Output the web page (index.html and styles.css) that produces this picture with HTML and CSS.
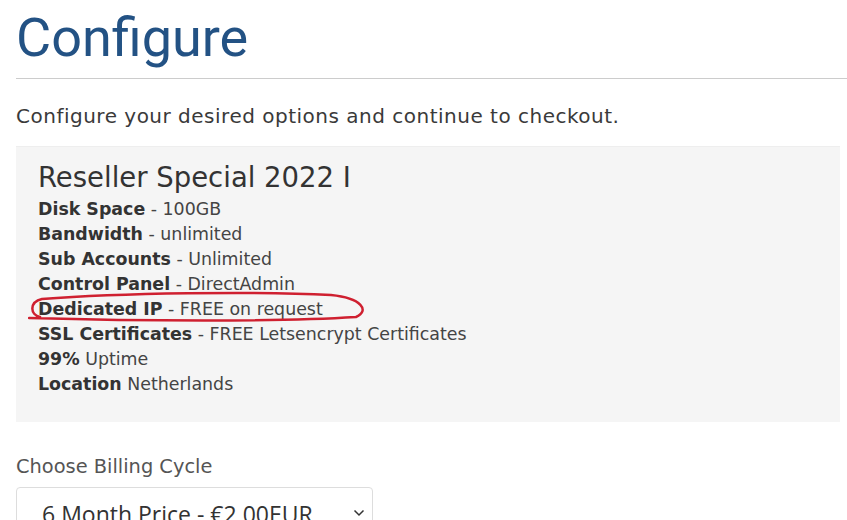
FILE: index.html
```html
<!DOCTYPE html>
<html lang="en">
<head>
    <meta charset="UTF-8">
    <meta name="viewport" content="width=device-width, initial-scale=1.0">
    <title>Configure</title>
    <link rel="stylesheet" href="styles.css">
</head>
<body>
    <div class="page">
        <h1 class="title">Configure</h1>
        <hr class="rule">

        <p class="intro">Configure your desired options and continue to checkout.</p>

        <div class="product">
            <h2 class="product-name">Reseller Special 2022 I</h2>
            <ul class="features">
                <li><b>Disk Space</b> - 100GB</li>
                <li><b>Bandwidth</b> - unlimited</li>
                <li><b>Sub Accounts</b> - Unlimited</li>
                <li><b>Control Panel</b> - DirectAdmin</li>
                <li class="marked">
                    <b>Dedicated IP</b> - FREE on request
                    <svg class="scribble" width="360" height="36" viewBox="0 0 360 36">
                        <path d="M12 26 C2 24, 1 11, 14 8 C90 2, 230 0, 303 4 C334 7, 342 20, 328 26 C250 31, 110 30, 1 27" fill="none" stroke="#cf2030" stroke-width="2.5" stroke-linecap="round"/>
                    </svg>
                </li>
                <li><b>SSL Certificates</b> - FREE Letsencrypt Certificates</li>
                <li><b>99%</b> Uptime</li>
                <li><b>Location</b> Netherlands</li>
            </ul>
        </div>

        <label class="field-label" for="billing">Choose Billing Cycle</label>
        <div class="select-wrap">
            <select id="billing" class="select">
                <option>6 Month Price - €2.00EUR</option>
                <option>Annually - €4.00EUR</option>
            </select>
            <svg class="chevron" width="12" height="8" viewBox="0 0 12 8">
                <path d="M1.5 1.5 L6 6 L10.5 1.5" fill="none" stroke="#333" stroke-width="1.5"/>
            </svg>
        </div>
    </div>
</body>
</html>
```

FILE: styles.css
```css
body {
    margin: 0;
    font-family: "DejaVu Sans", sans-serif;
    color: #333;
    background: #fff;
}
.page {
    padding: 0 7px 0 16px;
}
.title {
    font-family: Roboto, sans-serif;
    font-weight: 400;
    font-size: 54px;
    line-height: 64px;
    color: #235284;
    margin: 6px 0 0;
}
.rule {
    border: 0;
    border-top: 1px solid #ccc;
    margin: 8px -7px 0 0;
}
.intro {
    font-size: 20px;
    letter-spacing: 0.5px;
    color: #3a3a3a;
    margin: 25px 0 18px;
}
.product {
    background: #f5f5f5;
    border-top: 1px solid #eee;
    padding: 14px 22px 25px;
}
.product-name {
    font-weight: 400;
    font-size: 27.5px;
    margin: 0 0 4px;
}
.features {
    list-style: none;
    margin: 0;
    padding: 0;
    font-size: 17.4px;
    line-height: 25px;
    color: #444;
}
.features b {
    color: #333;
}
.marked {
    position: relative;
}
.scribble {
    position: absolute;
    left: -10px;
    top: -6px;
}
.field-label {
    display: block;
    margin-top: 33px;
    font-size: 19.4px;
    color: #555;
}
.select-wrap {
    position: relative;
    width: 357px;
    margin-top: 9px;
}
.select {
    appearance: none;
    width: 357px;
    height: 54px;
    font-family: "Open Sans", sans-serif;
    font-size: 23px;
    color: #333;
    padding: 4px 25px;
    border: 1px solid #ddd;
    border-radius: 4px;
    background: #fff;
}
.chevron {
    position: absolute;
    right: 8px;
    top: 22px;
}
```
